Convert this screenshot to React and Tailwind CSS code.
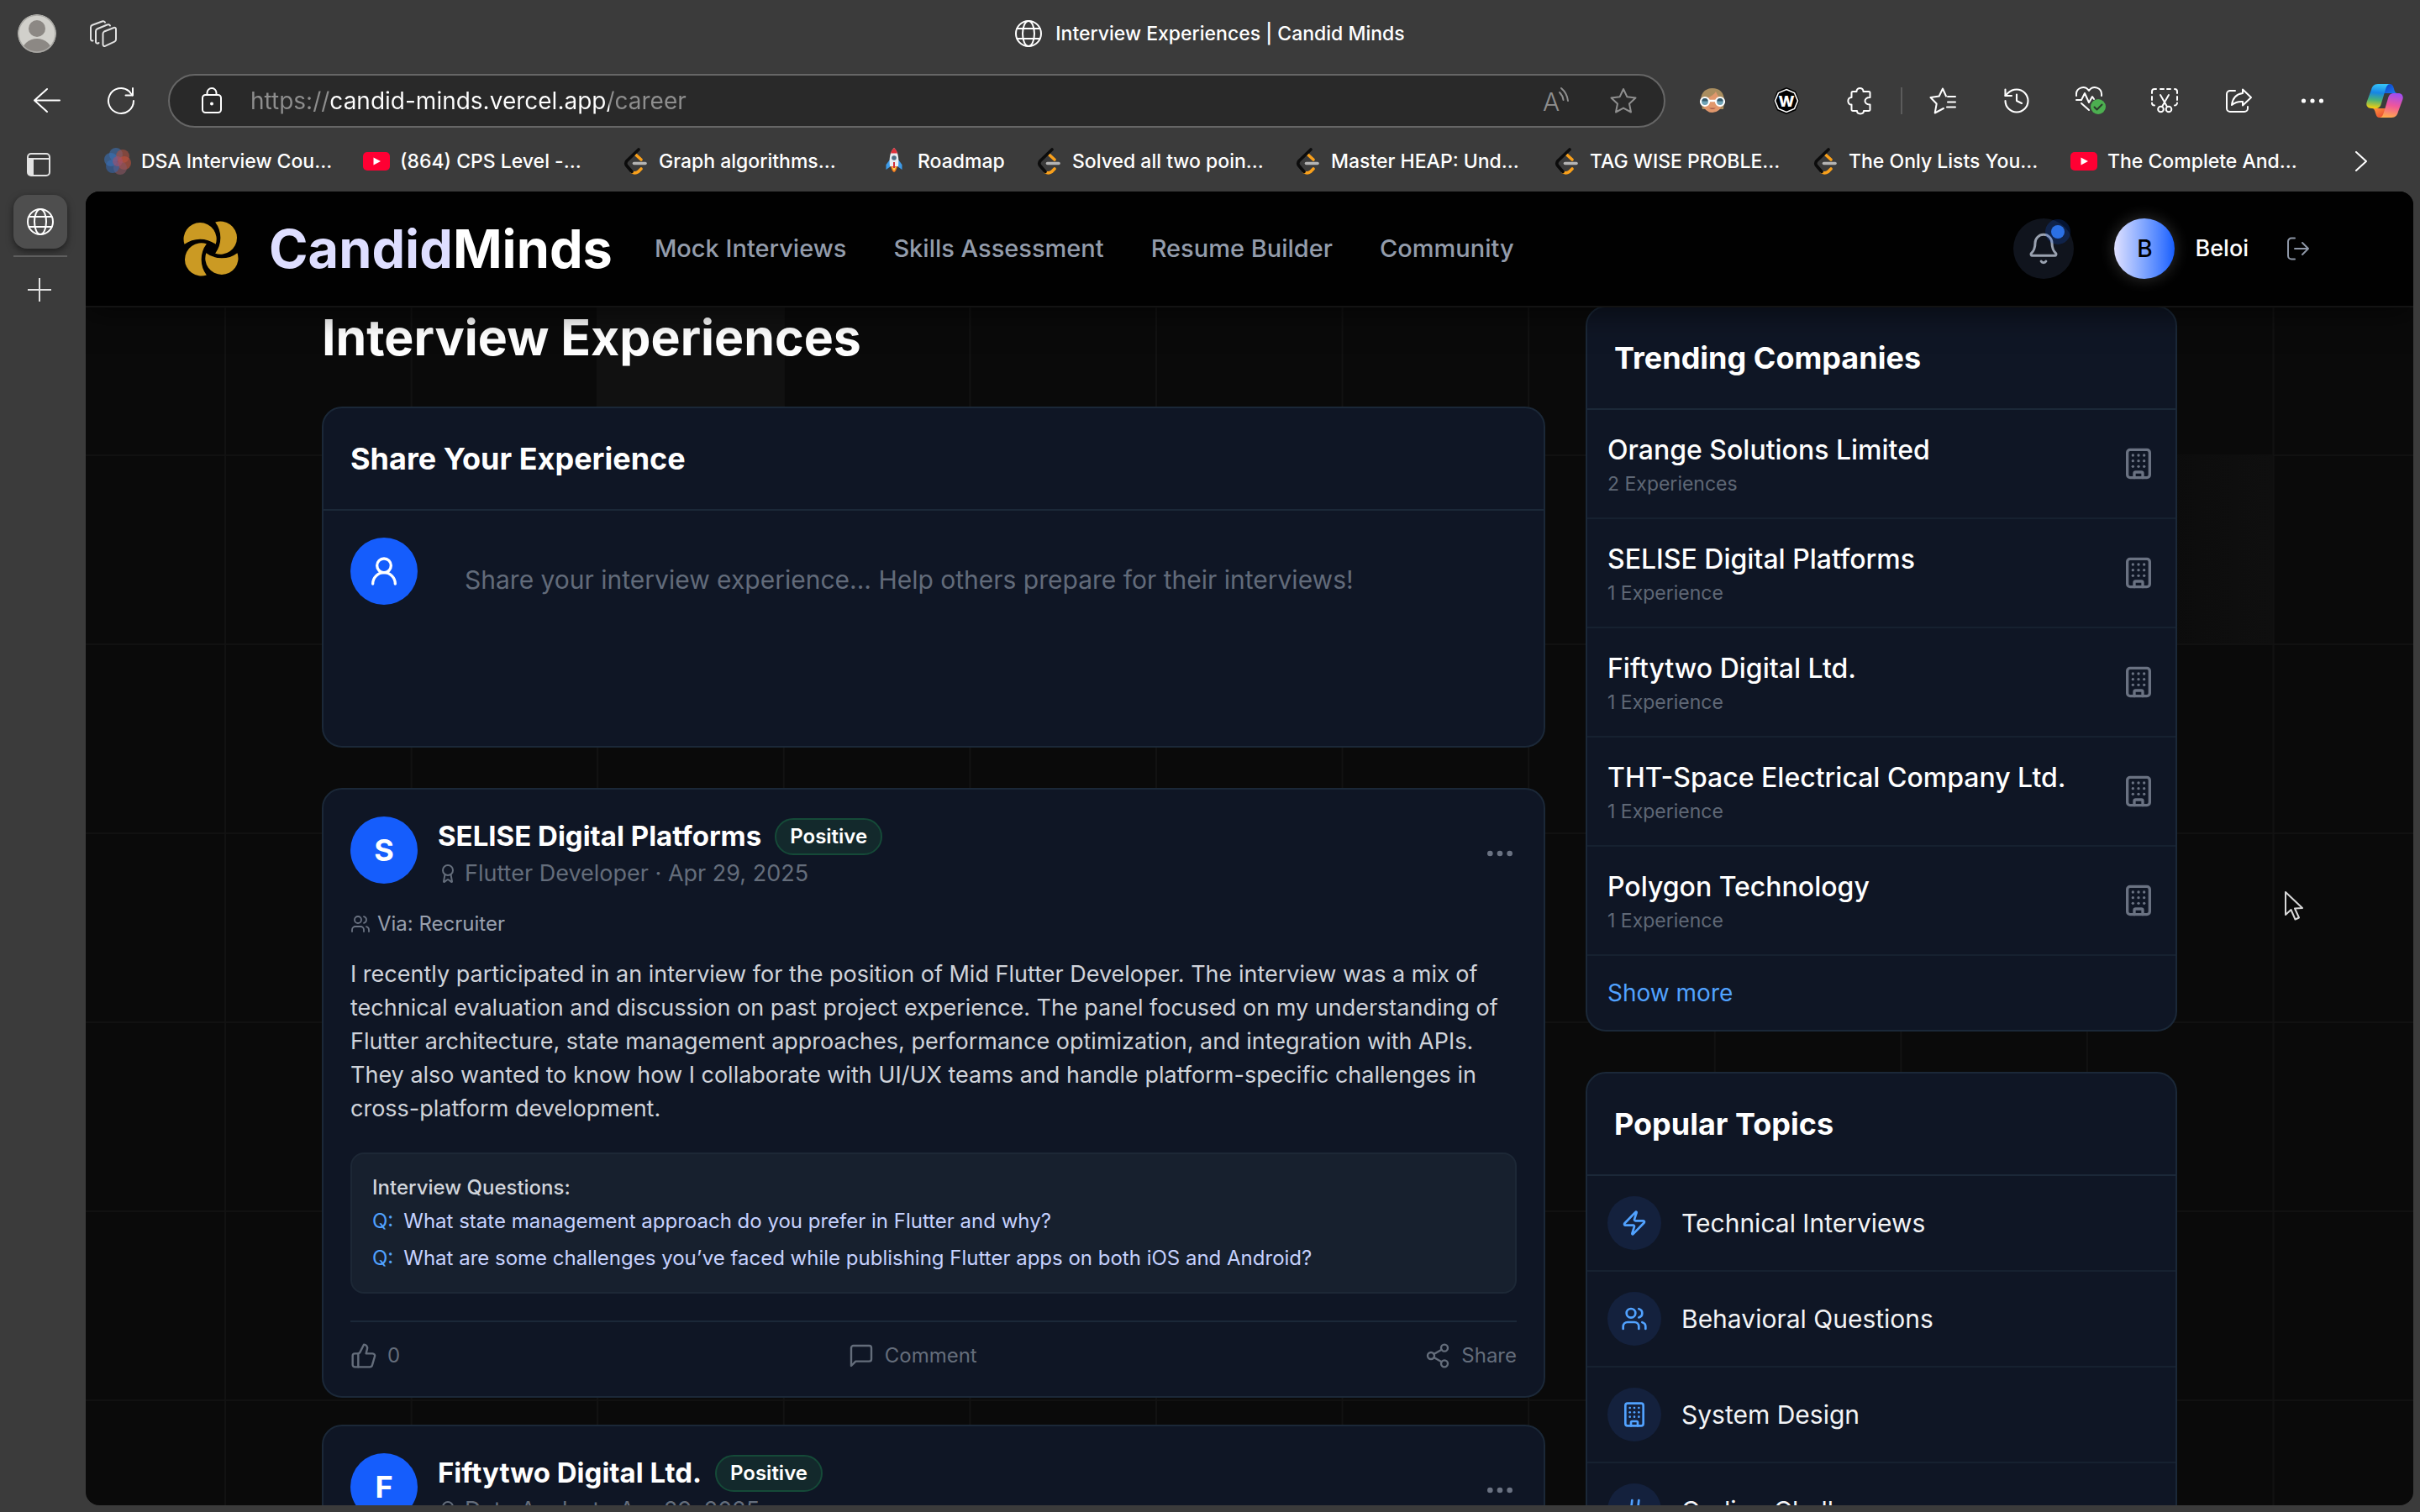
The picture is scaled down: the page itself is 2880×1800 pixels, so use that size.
import React from "react";
import { Award, Bell, Building, Ellipsis, Hash, History, Share2, ThumbsUp, UserRound, Users, Zap } from "lucide-react";

/* ---------- browser icons ---------- */

function Line({ children, size = 32, className = "" }) {
  return (
    <svg viewBox="0 0 32 32" width={size} height={size} fill="none" stroke="currentColor" strokeWidth="2" strokeLinecap="round" strokeLinejoin="round" className={`overflow-visible ${className}`} aria-hidden="true">
      {children}
    </svg>
  );
}

const GlobeIcon = () => (
  <Line>
    <circle cx="16" cy="16" r="15" />
    <ellipse cx="16" cy="16" rx="7" ry="15" />
    <path d="M2.5 10h27M2.5 22h27" />
  </Line>
);

const WorkspacesIcon = () => (
  <Line className="text-[#e2e2e2]">
    <path d="M3.500 24.500A2 2 0 0 1 1 22.500V8.500a3 3 0 0 1 2-2.700L14.500 1.500a2.500 2.500 0 0 1 3.500 1.200" />
    <path d="M10.500 27a2 2 0 0 1-3.500-1V13a3 3 0 0 1 2-2.800L20.500 5.500a2.500 2.500 0 0 1 3.500 1" />
    <path d="M17 13.500 28.500 9a1.800 1.800 0 0 1 2.500 1.700V23a3 3 0 0 1-1.800 2.700L18 30.800a1.800 1.800 0 0 1-2.500-1.700V16a3 3 0 0 1 1.500-2.500Z" />
  </Line>
);

const BackIcon = () => (
  <Line>
    <path d="M31 15.500H1M16 2 1 15.500 16 29" />
  </Line>
);

const ReloadIcon = () => (
  <Line>
    <path d="M31 16A15 15 0 1 1 25.500 4.400L29.500 9.500" />
    <path d="M30 1v8.500h-8.500" />
  </Line>
);

const LockIcon = () => (
  <Line>
    <rect x="5" y="9" width="22" height="21" rx="3.500" />
    <path d="M10.500 9V6.500a5.500 5.500 0 0 1 11 0V9" />
    <circle cx="16" cy="19.500" r="1" fill="currentColor" />
  </Line>
);

const ReadAloudIcon = () => (
  <Line>
    <text x="0" y="28" fontSize="30" fontFamily="Inter, sans-serif" fontWeight="300" fill="currentColor" stroke="none">A</text>
    <path d="M20 6q4 4 4.500 9M22 1q7 6 8 15" />
  </Line>
);

const StarIcon = () => (
  <Line>
    <path d="m16 2 4.300 9.200 10.200 1.300-7.500 7 2 10L16 24.600 7 29.500l2-10-7.500-7 10.200-1.300Z" />
  </Line>
);

const PuzzleIcon = () => (
  <Line>
    <path d="M7 5h4.500c-.5-5.500 8.500-5.500 8 0H26a1.500 1.500 0 0 1 1.500 1.500V12c-8-.5-8 9 0 8.500v6A1.500 1.500 0 0 1 26 28h-6c0 4.500-8 4.500-8 0H7a1.500 1.500 0 0 1-1.500-1.500v-6c-5.500.500-5.500-9 0-8.500V6.500A1.500 1.500 0 0 1 7 5Z" />
  </Line>
);

const FavoritesIcon = () => (
  <Line>
    <path d="M20 10.500 16 1.500l-4.300 9L1.500 12l7.200 7.500-2 11L17 25" />
    <path d="M22 11h9M22 17.500h9M21 23.500h10" />
  </Line>
);

const HealthIcon = () => (
  <svg viewBox="0 0 36 34" width="36" height="34" fill="none" stroke="currentColor" strokeWidth="2" strokeLinecap="round" strokeLinejoin="round" aria-hidden="true">
    <path d="M1 11C0 1 11-2 16 5c5-7 16-4 15 6" />
    <path d="M1 16h6l4-8 5 11 4-7 2 3" />
    <path d="m7 20 9 8" />
    <circle cx="27" cy="24" r="9" fill="#4caf50" stroke="none" />
    <path d="m22.500 24.500 3 3 6-6" stroke="#2b3b2b" />
  </svg>
);

const CaptureIcon = () => (
  <Line>
    <path d="M1 7V5a3 3 0 0 1 3-3h2M11 2h4M19 2h4M28 2h0a3 3 0 0 1 3 3v2M1 11v4M31 11v4M1 18.500a3 3 0 0 0 3 3M31 18.500a3 3 0 0 1-3 3" />
    <path d="m11 9 8 14M21 9l-8 14" />
    <circle cx="11.500" cy="26" r="3.300" />
    <circle cx="21" cy="26" r="3.300" />
  </Line>
);

const SharePageIcon = () => (
  <Line>
    <path d="M12 4H6a4 4 0 0 0-4 4v17a4 4 0 0 0 4 4h17a4 4 0 0 0 4-4v-2" />
    <path d="M21 2.500 31 12l-10 9.500V17c-6-.5-9.500 1-13 4C9 13 13.500 8 21 7Z" />
  </Line>
);

const DotsIcon = () => (
  <Line>
    <g fill="currentColor" stroke="none">
      <circle cx="5.500" cy="16" r="2.600" />
      <circle cx="16" cy="16" r="2.600" />
      <circle cx="26.500" cy="16" r="2.600" />
    </g>
  </Line>
);

const FaceIcon = () => (
  <svg viewBox="0 0 32 32" width="32" height="32" aria-hidden="true">
    <path d="M2 16C2 6 8 1 16 1s14 5 14 15l-1 10H4Z" fill="#a98d5f" />
    <path d="M5 14C10 13 17 10 20 5c2 5 5 8 7 9v6a11 10 0 0 1-22 0Z" fill="#e0976c" />
    <path d="M12 24.500h8q-4 3-8 0" fill="#a85c48" />
    <path d="M12 16h8" stroke="#fff" strokeWidth="2.500" />
    <circle cx="7" cy="17" r="5" fill="#6fa3b5" stroke="#fff" strokeWidth="2.200" />
    <circle cx="25" cy="17" r="5" fill="#6fa3b5" stroke="#fff" strokeWidth="2.200" />
    <path d="M3.500 16.500a3.500 3.500 0 0 1 7 0ZM21.500 16.500a3.500 3.500 0 0 1 7 0Z" fill="#36596a" />
  </svg>
);

const WIcon = () => (
  <svg viewBox="0 0 32 32" width="32" height="32" aria-hidden="true">
    <path d="M16 0 27 4.500 31.500 16 27 27.500 16 32 5 27.500.5 16 5 4.500Z" fill="#000" />
    <path d="M16 2.500 25.500 6.500 29.500 16l-4 9.500-9.500 4-9.500-4-4-9.500 4-9.500Z" fill="none" stroke="#fff" strokeWidth="1.600" />
    <text x="16" y="22.500" textAnchor="middle" fontSize="18" fontWeight="800" fontFamily="Inter, sans-serif" fill="#fff">W</text>
  </svg>
);

const CopilotIcon = () => (
  <svg viewBox="0 0 44 40" width="44" height="40" aria-hidden="true">
    <defs>
      <linearGradient id="cpA" x1="0.400" y1="0" x2="0.300" y2="1">
        <stop offset="0" stopColor="#35c2f7" />
        <stop offset="0.350" stopColor="#1685e6" />
        <stop offset="0.650" stopColor="#48b17a" />
        <stop offset="1" stopColor="#f7cf0c" />
      </linearGradient>
      <linearGradient id="cpB" x1="0.600" y1="0" x2="0.400" y2="1">
        <stop offset="0" stopColor="#a04df0" />
        <stop offset="0.500" stopColor="#f0569b" />
        <stop offset="1" stopColor="#ffac4b" />
      </linearGradient>
      <linearGradient id="cpC" x1="0" y1="0" x2="1" y2="1">
        <stop offset="0" stopColor="#0a3bc4" />
        <stop offset="1" stopColor="#1e7df0" />
      </linearGradient>
      <linearGradient id="cpD" x1="0" y1="0" x2="1" y2="1">
        <stop offset="0" stopColor="#ff9a3d" />
        <stop offset="1" stopColor="#e6402f" />
      </linearGradient>
    </defs>
    <path d="M20 0h8c3 0 4 2 4.800 5 .8 3 1.700 6 4.200 6H21Z" fill="url(#cpC)" />
    <path d="M24 40h-8c-3 0-4-2-4.800-5-.8-3-1.700-6-4.200-6h16Z" fill="url(#cpD)" />
    <path d="M29 0H14C9 0 7 3 6 7L.8 21C-1 26 2 29 6 29h5c4 0 6-2 7-6l4.500-15C24 3 25 0 29 0Z" fill="url(#cpA)" />
    <path d="M15 40h15c5 0 7-3 8-7l5.200-14C45 14 42 11 38 11h-5c-4 0-6 2-7 6l-4.500 15C20 37 19 40 15 40Z" fill="url(#cpB)" />
  </svg>
);

/* ---------- bookmark icons ---------- */

const FlowerIcon = () => (
  <svg viewBox="0 0 32 32" width="32" height="32" className="shrink-0" aria-hidden="true">
    <g fillOpacity="0.600">
      <circle cx="14" cy="8" r="8" fill="#3d6fb0" />
      <circle cx="22" cy="10" r="8" fill="#b0503f" />
      <circle cx="24" cy="18" r="8" fill="#c4523c" />
      <circle cx="19" cy="24" r="8" fill="#8a5562" />
      <circle cx="10" cy="22" r="8" fill="#3566ab" />
      <circle cx="8" cy="14" r="8" fill="#3b72b8" />
      <circle cx="16" cy="16" r="6" fill="#a3506a" />
    </g>
  </svg>
);

const YoutubeIcon = () => (
  <svg viewBox="0 0 32 32" width="32" height="32" className="shrink-0" aria-hidden="true">
    <rect y="5" width="32" height="22" rx="5" fill="#ff0033" />
    <path d="m12.500 11.500 8.500 4.500-8.500 4.500Z" fill="#fff" />
  </svg>
);

const LeetcodeIcon = () => (
  <svg viewBox="0 0 32 32" width="32" height="32" className="shrink-0" fill="none" strokeWidth="3.600" strokeLinecap="round" aria-hidden="true">
    <path d="m17 8.500 6 5.500M12 29q4 2 7.500-.500l3.500-3.500" stroke="#f9a01b" />
    <path d="M20 2 6 15.500q-2.500 3 0 6l6 7" stroke="#0c0c0c" />
    <path d="M14.500 18.500h13.500" stroke="#b4b4b4" />
  </svg>
);

const RocketIcon = () => (
  <svg viewBox="0 0 32 32" width="32" height="32" className="shrink-0" aria-hidden="true">
    <path d="M12 22q4 14 8 0Z" fill="#f47b20" />
    <path d="M14 23q2 8 4 0Z" fill="#ffd34d" />
    <path d="M11 14 6.500 20v6l5.500-4ZM21 14l4.500 6v6L20 22Z" fill="#3d9be9" />
    <path d="M16 0c5 5 6 12 5 22H11C10 12 11 5 16 0Z" fill="#e9edf2" />
    <path d="M16 0c2 2 3.300 4 4 6.500h-8C12.700 4 14 2 16 0Z" fill="#e0323c" />
    <circle cx="16" cy="12" r="2.800" fill="#4d6d84" />
    <path d="M16 17v7" stroke="#d0303a" strokeWidth="2" />
  </svg>
);

/* ---------- app icons ---------- */

function Logo() {
  const petal = "M1.500 27A19 19 0 1 1 37.500 27 30 30 0 0 0 1.500 27Z";
  return (
    <svg viewBox="0 0 64 64" width="66" height="66" fill="#cb9a23" aria-hidden="true">
      <path d={petal} />
      <path d={petal} transform="rotate(90 32 32)" />
      <path d={petal} transform="rotate(180 32 32)" />
      <path d={petal} transform="rotate(270 32 32)" />
    </svg>
  );
}

const LogoutIcon = () => (
  <svg viewBox="0 0 28 28" width="28" height="28" fill="none" stroke="currentColor" strokeWidth="2" strokeLinecap="round" strokeLinejoin="round" aria-hidden="true">
    <path d="M11 1.500H7a4 4 0 0 0-4 4v17a4 4 0 0 0 4 4h4" />
    <path d="M11 14h16M20 7l7 7-7 7" />
  </svg>
);

const CommentIcon = () => (
  <svg viewBox="0 0 24 24" width="32" height="32" fill="none" stroke="currentColor" strokeWidth="1.800" strokeLinecap="round" strokeLinejoin="round" aria-hidden="true">
    <path d="M21 15a2 2 0 0 1-2 2H7l-4 4V5a2 2 0 0 1 2-2h14a2 2 0 0 1 2 2z" />
  </svg>
);

/* ---------- browser chrome ---------- */

function ToolButton({ label, className = "text-white", children }) {
  return (
    <button aria-label={label} className={`flex h-16 w-[88px] shrink-0 items-center justify-center ${className}`}>
      {children}
    </button>
  );
}

function TitleBar() {
  return (
    <div className="grid h-20 grid-cols-[1fr_auto_1fr] items-center">
      <div className="flex items-center gap-10 pl-[21px]">
        <button aria-label="Profile">
          <svg viewBox="0 0 46 46" width="46" height="46" className="rounded-full" aria-hidden="true">
            <circle cx="23" cy="23" r="23" fill="#d1d0cb" />
            <circle cx="23" cy="17" r="10" fill="#8c8884" />
            <ellipse cx="23" cy="45" rx="18" ry="16" fill="#8c8884" />
            <circle cx="23" cy="23" r="22" fill="none" stroke="#a9a8a4" strokeWidth="1.500" />
          </svg>
        </button>
        <button aria-label="Workspaces"><WorkspacesIcon /></button>
      </div>
      <div className="flex items-center gap-4 text-[23px] font-medium text-white">
        <GlobeIcon />
        Interview Experiences | Candid Minds
      </div>
    </div>
  );
}

function Toolbar() {
  return (
    <div className="mt-2 flex items-center pl-3">
      <ToolButton label="Back"><BackIcon /></ToolButton>
      <ToolButton label="Reload"><ReloadIcon /></ToolButton>
      <div className="mx-3 flex h-16 min-w-0 flex-1 items-center rounded-full border-2 border-[#666666] bg-[#292929] pl-[34px] text-white">
        <LockIcon />
        <input
          aria-label="Address"
          defaultValue="https://candid-minds.vercel.app/career"
          className="ml-[30px] h-12 min-w-0 flex-1 bg-[linear-gradient(to_right,#8e8e8e_95px,#ffffff_95px,#ffffff_427px,#8e8e8e_427px)] bg-clip-text text-[28px] text-transparent outline-none"
        />
        <button aria-label="Read aloud" className="flex w-20 justify-center text-[#8f8f8f]"><ReadAloudIcon /></button>
        <button aria-label="Add to favorites" className="mr-2 flex w-20 justify-center text-[#8f8f8f]"><StarIcon /></button>
      </div>
      <ToolButton label="Extension profile"><FaceIcon /></ToolButton>
      <ToolButton label="W extension"><WIcon /></ToolButton>
      <ToolButton label="Extensions"><PuzzleIcon /></ToolButton>
      <div className="flex w-[10px] justify-center"><div className="h-8 w-0.5 bg-[#5c5c5c]" /></div>
      <ToolButton label="Favorites"><FavoritesIcon /></ToolButton>
      <ToolButton label="History"><History size={36} strokeWidth={1.4} /></ToolButton>
      <ToolButton label="Browser essentials"><HealthIcon /></ToolButton>
      <ToolButton label="Screenshot"><CaptureIcon /></ToolButton>
      <ToolButton label="Share page"><SharePageIcon /></ToolButton>
      <ToolButton label="More"><DotsIcon /></ToolButton>
      <button aria-label="Copilot" className="flex h-16 w-[84px] shrink-0 items-center justify-center"><CopilotIcon /></button>
    </div>
  );
}

const BOOKMARKS = [
  ["DSA Interview Cou...", FlowerIcon],
  ["(864) CPS Level -...", YoutubeIcon],
  ["Graph algorithms...", LeetcodeIcon],
  ["Roadmap", RocketIcon],
  ["Solved all two poin...", LeetcodeIcon],
  ["Master HEAP: Und...", LeetcodeIcon],
  ["TAG WISE PROBLE...", LeetcodeIcon],
  ["The Only Lists You...", LeetcodeIcon],
  ["The Complete And...", YoutubeIcon],
];

function Bookmarks() {
  return (
    <nav aria-label="Bookmarks" className="flex h-[72px] shrink-0 items-center pl-[22px] text-[23px] font-medium text-white">
      {BOOKMARKS.map(([label, Icon]) => (
        <a key={label} href="#" className={`flex shrink-0 items-center gap-3 whitespace-nowrap ${label === "Roadmap" ? "w-[184px]" : "w-[308px]"}`}>
          <Icon />
          {label}
        </a>
      ))}
      <button aria-label="More bookmarks" className="ml-auto mr-[54px]">
        <svg viewBox="0 0 16 24" width="16" height="24" fill="none" stroke="currentColor" strokeWidth="2" strokeLinecap="round" strokeLinejoin="round" aria-hidden="true">
          <path d="m2 1 12 11L2 23" />
        </svg>
      </button>
    </nav>
  );
}

function TabRail() {
  return (
    <aside className="flex w-[102px] shrink-0 flex-col items-center pr-[6px] text-white">
      <button aria-label="Tab actions" className="flex h-[76px] items-center pt-1 pr-1">
        <svg viewBox="0 0 28 28" width="28" height="28" className="text-[#e2e2e2]" fill="none" stroke="currentColor" strokeWidth="2" aria-hidden="true">
          <rect x="1" y="1" width="26" height="26" rx="4" />
          <path d="M1 7h26" />
          <path d="M1 7h7v20H4a3 3 0 0 1-3-3Z" fill="currentColor" stroke="none" />
        </svg>
      </button>
      <button aria-label="Interview Experiences tab" className="flex size-16 items-center justify-center rounded-2xl bg-[#4e4e4e] shadow-[0_3px_8px_rgba(0,0,0,0.5)]">
        <GlobeIcon />
      </button>
      <div className="mt-2 h-0.5 w-16 bg-[#5e5e5e]" />
      <button aria-label="New tab" className="mt-[25px] pr-0.5 text-[#e2e2e2]">
        <svg viewBox="0 0 28 28" width="28" height="28" stroke="currentColor" strokeWidth="2" aria-hidden="true"><path d="M14 0v28M0 14h28" /></svg>
      </button>
    </aside>
  );
}

/* ---------- web app ---------- */

function SiteHeader() {
  return (
    <header className="relative z-10 flex h-[138px] shrink-0 items-center border-b-2 border-[#131313] bg-[#010101] px-[116px] shadow-[0_8px_32px_rgba(0,0,0,0.5)]">
      <a href="#" className="flex items-center gap-9 text-[63px] leading-none font-bold text-white">
        <Logo />
        <span><span className="text-[#dedeff]">Candid</span>Minds</span>
      </a>
      <nav className="ml-[50px] flex gap-14 text-[29px] text-[#939cab]">
        {["Mock Interviews", "Skills Assessment", "Resume Builder", "Community"].map((t) => (
          <a key={t} href="#" className="font-medium whitespace-nowrap">{t}</a>
        ))}
      </nav>
      <div className="ml-auto flex items-center">
        <button aria-label="Notifications" className="relative flex size-[72px] items-center justify-center rounded-full bg-[#10141d] text-[#99a1af]">
          <Bell size={40} strokeWidth={1.8} />
          <span className="absolute top-px right-1 flex size-[30px] items-center justify-center rounded-full bg-[#155dfc]/20">
            <span className="size-4 rounded-full bg-[#2b70e4]" />
          </span>
        </button>
        <button className="ml-12 flex items-center gap-6 text-[27px] font-medium text-white">
          <span className="flex size-[72px] items-center justify-center rounded-full bg-linear-to-r from-[#e0e0ff] to-[#155dfc] text-[28px] text-black shadow-[0_0_20px_rgba(255,255,255,0.2)]">B</span>
          Beloi
        </button>
        <button aria-label="Log out" className="ml-9 p-2 text-[#8d96a6]"><LogoutIcon /></button>
      </div>
    </header>
  );
}

function Card({ title, children }) {
  return (
    <section className="rounded-3xl border-2 border-[#1b2838] bg-[#0f1625]">
      {title && <h2 className="border-b-2 border-[#1b2838] p-8 text-[36px] leading-[56px] font-bold text-white">{title}</h2>}
      {children}
    </section>
  );
}

function ShareCard() {
  return (
    <Card title="Share Your Experience">
      <div className="flex gap-6 p-8">
        <div className="flex size-20 shrink-0 items-center justify-center rounded-full bg-[#155dfc] text-white">
          <UserRound size={40} strokeWidth={2} />
        </div>
        <textarea
          aria-label="Share your interview experience"
          placeholder="Share your interview experience... Help others prepare for their interviews!"
          className="h-[216px] flex-1 resize-none bg-transparent px-8 pt-[26px] text-[30px] leading-[48px] text-white outline-none placeholder:text-[#626b7a]"
        />
      </div>
    </Card>
  );
}

function PostHead({ company, role, date }) {
  return (
    <div className="flex items-start gap-6">
      <div className="flex size-20 shrink-0 items-center justify-center rounded-full bg-[#155dfc] text-[36px] font-bold text-white">{company[0]}</div>
      <div className="flex-1">
        <div className="flex h-12 items-center gap-4">
          <h3 className="text-[33px] font-bold text-white">{company}</h3>
          <span className="rounded-full border-2 border-[#154a38] bg-[#13292c] px-4 text-[24px] leading-[40px] font-semibold text-white">Positive</span>
        </div>
        <div className="flex h-10 items-center gap-2 text-[27px] text-[#646d7b]">
          <Award size={24} strokeWidth={2} />
          {role} · {date}
        </div>
      </div>
      <button aria-label="Post options" className="self-center text-[#6a7282]"><Ellipsis size={40} /></button>
    </div>
  );
}

function SelisePost() {
  return (
    <Card>
      <article className="p-8">
        <PostHead company="SELISE Digital Platforms" role="Flutter Developer" date="Apr 29, 2025" />
        <p className="mt-6 flex items-center gap-2 text-[24px] leading-8 text-[#99a1af]">
          <Users size={24} strokeWidth={1.8} className="text-[#6a7282]" />
          Via: Recruiter
        </p>
        <p className="mt-6 text-[27px] leading-10 text-[#cfd3da]">
          I recently participated in an interview for the position of Mid Flutter Developer. The interview was a mix of technical evaluation and discussion on past project experience. The panel focused on my understanding of Flutter architecture, state management approaches, performance optimization, and integration with APIs. They also wanted to know how I collaborate with UI/UX teams and handle platform-specific challenges in cross-platform development.
        </p>
        <div className="mt-8 rounded-2xl border-2 border-[#1d2836] bg-[#17202e] p-6 text-[24px] leading-8">
          <h4 className="font-medium text-[#d1d5dc]">Interview Questions:</h4>
          <ul className="mt-2 flex flex-col gap-3 text-[#c6d2ff]">
            {[
              "What state management approach do you prefer in Flutter and why?",
              "What are some challenges you’ve faced while publishing Flutter apps on both iOS and Android?",
            ].map((q) => (
              <li key={q} className="flex gap-3"><span className="text-[#51a2ff]">Q:</span>{q}</li>
            ))}
          </ul>
        </div>
        <div className="mt-8 flex justify-between border-t-2 border-[#1b2838] pt-6 text-[24px] leading-8 text-[#646d7b]">
          <button className="flex items-center gap-3"><ThumbsUp size={32} strokeWidth={1.8} />0</button>
          <button className="flex items-center gap-3"><CommentIcon />Comment</button>
          <button className="flex items-center gap-3"><Share2 size={32} strokeWidth={1.8} />Share</button>
        </div>
      </article>
    </Card>
  );
}

const COMPANIES = [
  ["Orange Solutions Limited", "2 Experiences"],
  ["SELISE Digital Platforms", "1 Experience"],
  ["Fiftytwo Digital Ltd.", "1 Experience"],
  ["THT-Space Electrical Company Ltd.", "1 Experience"],
  ["Polygon Technology", "1 Experience"],
];

const TOPICS = [
  ["Technical Interviews", Zap],
  ["Behavioral Questions", Users],
  ["System Design", Building],
  ["Coding Challenges", Hash],
];

function Main() {
  return (
    <main className="relative mx-auto -mt-0.5 grid w-full max-w-[2304px] grid-cols-3 items-start gap-12 px-12">
      <div className="col-span-2">
        <h1 className="mb-11 text-[59px] leading-[76px] font-bold text-white">Interview Experiences</h1>
        <ShareCard />
        <div className="mt-12 flex flex-col gap-8">
          <SelisePost />
          <Card>
            <article className="p-8">
              <PostHead company="Fiftytwo Digital Ltd." role="Data Analyst" date="Apr 29, 2025" />
            </article>
          </Card>
        </div>
      </div>
      <div className="flex flex-col gap-12">
        <Card title="Trending Companies">
          <ul>
            {COMPANIES.map(([name, count]) => (
              <li key={name} className="flex items-center justify-between border-b-2 border-[#162130] p-6">
                <div>
                  <div className="text-[32px] leading-[48px] font-medium text-white">{name}</div>
                  <div className="text-[23px] leading-8 text-[#5f6876]">{count}</div>
                </div>
                <Building size={40} strokeWidth={2} className="text-[#6a7282]" />
              </li>
            ))}
          </ul>
          <button className="p-6 text-[28px] leading-10 text-[#51a2ff]">Show more</button>
        </Card>
        <Card title="Popular Topics">
          <ul>
            {TOPICS.map(([name, Icon]) => (
              <li key={name} className="border-b-2 border-[#162130]">
                <a href="#" className="flex items-center gap-6 p-6 text-[30px] leading-10 text-[#f3f4f6]">
                  <span className="flex size-16 items-center justify-center rounded-full bg-[#14213d] text-[#51a2ff]"><Icon size={32} strokeWidth={2} /></span>
                  {name}
                </a>
              </li>
            ))}
          </ul>
        </Card>
      </div>
    </main>
  );
}

function Backdrop() {
  return (
    <div aria-hidden="true" className="absolute inset-0 bg-[linear-gradient(to_right,#121212_2px,transparent_2px),linear-gradient(to_bottom,#111111_2px,transparent_2px)] bg-[size:8%_225px] bg-[position:165px_88px]">
      <div className="absolute top-[88px] left-[609px] h-[225px] w-[8%] bg-[#111111]" />
      <div className="absolute top-[313px] right-[167px] h-[225px] w-[8%] bg-linear-to-r from-[#0a0a0a] to-[#0f0f0f]" />
    </div>
  );
}

export default function App() {
  return (
    <div className="relative flex h-screen flex-col overflow-hidden bg-[#3b3b3b] font-['Inter',sans-serif]">
      <TitleBar />
      <Toolbar />
      <div className="flex min-h-0 flex-1 pt-1">
        <TabRail />
        <div className="flex min-w-0 flex-1 flex-col pr-2 pb-2">
          <Bookmarks />
          <div className="relative flex min-h-0 flex-1 flex-col overflow-hidden rounded-2xl bg-[#0a0a0a]">
            <Backdrop />
            <SiteHeader />
            <Main />
          </div>
        </div>
      </div>
      <svg viewBox="0 0 24 38" width="24" height="38" className="absolute top-[1060px] right-[138px]" aria-hidden="true">
        <path d="M2 2v27l6.500-6 5 11.500 4.500-2L13 21.500l9-.5Z" fill="#0a0a0a" stroke="#d8d8d8" strokeWidth="2" strokeLinejoin="round" />
      </svg>
    </div>
  );
}
